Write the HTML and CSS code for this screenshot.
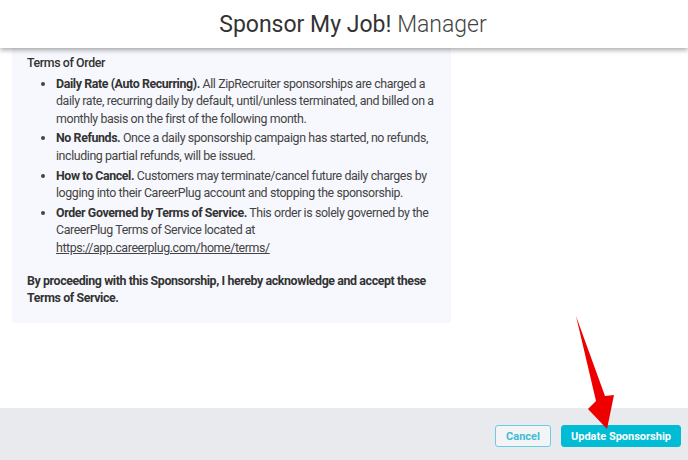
FILE: index.html
```html
<!DOCTYPE HTML>
<html>
<head>
    <title>Sponsor My Job! Manager</title>
    <meta charset="utf-8" />
    <link rel="stylesheet" href="styles.css">
</head>
<body>

<div id="page">
    <!-- Header -->
    <header id="header">
        <h1>Sponsor My Job! <span class="light">Manager</span></h1>
    </header>

    <!-- Terms -->
    <main class="content">
        <div class="terms">
            <p class="terms-title">Terms of Order</p>
            <ul class="terms-list">
                <li><b>Daily Rate (Auto Recurring).</b> All ZipRecruiter sponsorships are charged a daily rate, recurring daily by default, until/unless terminated, and billed on a monthly basis on the first of the following month.</li>
                <li><b>No Refunds.</b> Once a daily sponsorship campaign has started, no refunds, including partial refunds, will be issued.</li>
                <li><b>How to Cancel.</b> Customers may terminate/cancel future daily charges by logging into their CareerPlug account and stopping the sponsorship.</li>
                <li><b>Order Governed by Terms of Service.</b> This order is solely governed by the CareerPlug Terms of Service located at <a href="#">https://app.careerplug.com/home/terms/</a></li>
            </ul>
            <p class="accept">By proceeding with this Sponsorship, I hereby acknowledge and accept these Terms of Service.</p>
        </div>
    </main>

    <!-- Footer buttons -->
    <footer class="footer">
        <button class="btn btn-cancel">Cancel</button>
        <button class="btn btn-primary">Update Sponsorship</button>
    </footer>

    <!-- Red arrow annotation -->
    <svg class="arrow" width="688" height="460" viewBox="0 0 688 460">
        <polygon points="576,316 605,396 614,395 607,429 588,409 596,401" fill="#ee0000"/>
    </svg>
</div>

</body>
</html>
```

FILE: styles.css
```css
/* Base */
body {
    margin: 0;
    background: #fff;
    font-family: Roboto, "Liberation Sans", sans-serif;
    color: #444;
}

#page {
    position: relative;
    height: 460px;
    display: flex;
    flex-direction: column;
    overflow: hidden;
}

/* Header */
#header {
    height: 48px;
    display: flex;
    align-items: center;
    justify-content: center;
    background: #fff;
    box-shadow: 0 2px 5px rgba(0,0,0,0.35);
    position: relative;
    z-index: 2;
}

#header h1 {
    margin: 0;
    padding-left: 18px;
    font-size: 23px;
    font-weight: 400;
    color: #333;
}

#header .light {
    font-weight: 300;
    color: #444;
}

/* Content */
.content {
    flex: 1;
    padding-left: 12px;
}

.terms {
    width: 409px;
    padding: 6px 15px 16px 15px;
    background: #f7f8fd;
    font-size: 12.4px;
    letter-spacing: -0.4px;
    line-height: 17.6px;
}

.terms-title {
    margin: 0 0 3px 0;
    font-weight: 500;
    color: #333;
}

.terms-list {
    margin: 0;
    padding-left: 29px;
}

.terms-list li {
    margin-bottom: 2px;
}

.terms-list b,
.accept {
    font-weight: 700;
    color: #333;
}

.terms-list a {
    color: #444;
    text-decoration: underline;
}

.accept {
    margin: 15px 0 0 0;
}

/* Footer */
.footer {
    height: 52px;
    box-sizing: border-box;
    padding: 17px 7px 0 0;
    background: #e9eaee;
    display: flex;
    justify-content: flex-end;
    align-items: flex-start;
    gap: 10px;
}

.btn {
    height: 22px;
    border-radius: 3px;
    font-family: Roboto, "Liberation Sans", sans-serif;
    font-size: 11px;
    font-weight: 700;
    padding: 0;
    cursor: pointer;
}

.btn-cancel {
    width: 56px;
    background: #f3f4f6;
    border: 1px solid #6ccde0;
    color: #3fbcd6;
}

.btn-primary {
    width: 120px;
    background: #00bcd4;
    border: 1px solid #00bcd4;
    color: #fff;
}

/* Annotation */
.arrow {
    position: absolute;
    left: 0;
    top: 0;
    pointer-events: none;
    z-index: 3;
}
```
